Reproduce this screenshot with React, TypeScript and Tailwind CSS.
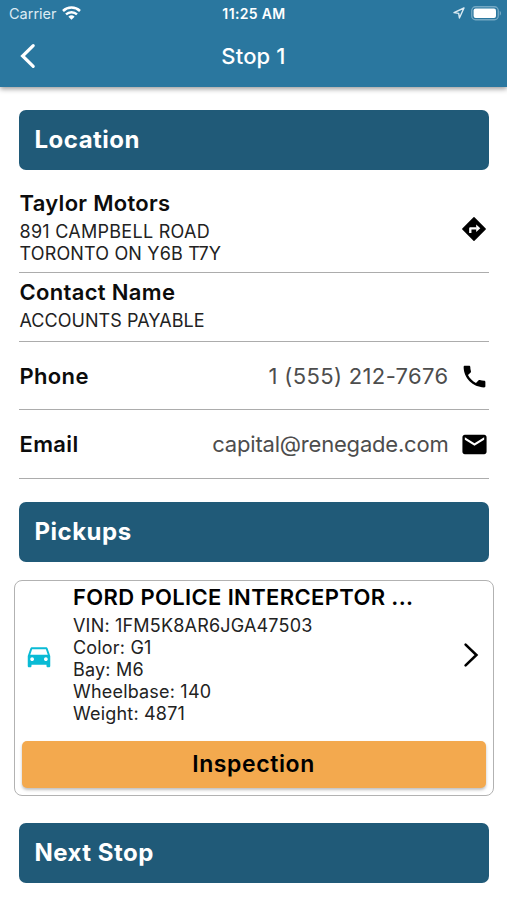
import { MdDirectionsCar, MdEmail, MdPhone } from 'react-icons/md';

interface SectionHeaderProps {
  title: string;
}

const SectionHeader = ({ title }: SectionHeaderProps) => (
  <h2 className="ml-[19px] mr-[18.5px] flex h-[60px] items-center rounded-[7px] bg-[#205a78] pl-[15.5px] text-[24px] font-bold leading-none tracking-[0.5px] text-white">
    {title}
  </h2>
);

interface ContactRowProps {
  label: string;
  value: string;
  icon: React.ElementType;
  valueClassName: string;
}

const ContactRow = ({ label, value, icon: Icon, valueClassName }: ContactRowProps) => (
  <div className="flex items-center border-b-[1.5px] border-[#acacac] pl-[0.5px] pt-[2px] text-[22px]">
    <span className="font-semibold tracking-[0.35px] text-[#0c0c0c]">{label}</span>
    <span className={`ml-auto mr-[11px] text-[#4d4d4d] ${valueClassName}`}>{value}</span>
    <Icon size={29} className="text-black" />
  </div>
);

const vehicleDetails = [
  'VIN: 1FM5K8AR6JGA47503',
  'Color: G1',
  'Bay: M6',
  'Wheelbase: 140',
  'Weight: 4871',
];

const DirectionsIcon = () => (
  <svg className="mr-[2px] mt-[27px]" width="26" height="26" viewBox="0 0 26 26">
    <path d="M13 1.8 24.2 13 13 24.2 1.8 13Z" stroke="black" strokeWidth="1.4" strokeLinejoin="round" />
    <path d="M9.3 17v-4.6h6.2" fill="none" stroke="white" strokeWidth="2.3" strokeLinejoin="round" />
    <path d="M15.2 8.6v7.4l4.1-3.7Z" fill="white" />
  </svg>
);

const StatusBar = () => (
  <div className="grid h-7 grid-cols-3 items-center pl-[9px] pr-[8px] text-[14px] leading-none">
    <div className="flex items-center gap-1.5">
      <span className="text-[14.5px] text-[#dcebf3]">Carrier</span>
      <svg className="-ml-px -mt-[3px]" width="19" height="14" viewBox="0 0 19 14" fill="none" stroke="currentColor">
        <path d="M1 5a12.3 12.3 0 0 1 17 0" strokeWidth="2.5" />
        <path d="M4 8.4a8 8 0 0 1 11 0" strokeWidth="2.4" />
        <path d="M9.5 13.8 6.4 10.8a4.5 4.5 0 0 1 6.2 0Z" fill="currentColor" stroke="none" />
      </svg>
    </div>
    <span className="text-center font-semibold tracking-[0.35px]">11:25 AM</span>
    <div className="-mr-[3px] -mt-[2px] flex items-center justify-end gap-[6px]">
      <svg className="-ml-px" width="12" height="12" viewBox="0 0 12 12" fill="none" stroke="#dcebf3" strokeWidth="1.4" strokeLinejoin="round">
        <path d="M11 1 1 5.6 5.7 6.4 6.4 11Z" />
      </svg>
      <svg width="31" height="15" viewBox="0 0 31 15">
        <rect x="0.75" y="0.75" width="26.5" height="13" rx="3.8" fill="none" stroke="#75a9c4" strokeWidth="1.3" />
        <rect x="2.6" y="2.6" width="22.4" height="9.3" rx="2" fill="white" />
        <path d="M28.7 5v4.6c1.8-.6 1.8-4 0-4.6Z" fill="#75a9c4" />
      </svg>
    </div>
  </div>
);

export default function App() {
  return (
    <main className="flex h-[900px] w-[507px] flex-col overflow-hidden bg-white font-['Inter',sans-serif]">
      <header className="h-[86.5px] shrink-0 bg-[#2a779f] text-white shadow-[0_2px_5px_rgba(0,0,0,0.4)]">
        <StatusBar />
        <div className="grid h-[57px] grid-cols-3 items-center">
          <button className="pl-[20px]" aria-label="Back">
            <svg className="-mt-[2px]" width="16" height="26" viewBox="0 0 16 26" fill="none" stroke="currentColor" strokeWidth="3.2" strokeLinecap="round">
              <path d="M13.2 2.6 2.6 13l10.6 10.4" />
            </svg>
          </button>
          <h1 className="text-center text-[22px] font-medium tracking-[0.15px]">Stop 1</h1>
        </div>
      </header>

      <div className="mt-[23px]">
        <SectionHeader title="Location" />
      </div>

      <section className="ml-[19px] mr-[18.5px] mt-[19px] grid grid-rows-[84px_69px_68px_69px]">
        <div className="flex items-start justify-between border-b-[1.5px] border-[#acacac] pl-[0.5px]">
          <div>
            <h3 className="-mt-px text-[22px] font-semibold leading-[30px] tracking-[0.3px] text-[#0c0c0c]">Taylor Motors</h3>
            <p className="mt-[3px] text-[18px] leading-[22px] tracking-[0.27px] text-[#222]">891 CAMPBELL ROAD</p>
            <p className="text-[18px] leading-[22px] tracking-[0.16px] text-[#222]">TORONTO ON Y6B T7Y</p>
          </div>
          <DirectionsIcon />
        </div>
        <div className="border-b-[1.5px] border-[#acacac] pl-[0.5px] pt-[4px]">
          <h3 className="text-[22px] font-semibold leading-[30px] tracking-[0.33px] text-[#0c0c0c]">Contact Name</h3>
          <p className="mt-px text-[18px] leading-[26px] tracking-[0.05px] text-[#222]">ACCOUNTS PAYABLE</p>
        </div>
        <ContactRow label="Phone" value="1 (555) 212-7676" icon={MdPhone} valueClassName="tracking-[0.35px]" />
        <ContactRow label="Email" value="capital@renegade.com" icon={MdEmail} valueClassName="tracking-[-0.2px]" />
      </section>

      <div className="mt-[23px]">
        <SectionHeader title="Pickups" />
      </div>

      <section className="mx-[13.5px] mt-[18px] flex h-[216px] flex-col rounded-[8px] border-[1.5px] border-[#b2b2b2] px-[7px] pb-[7px]">
        <div className="flex flex-1 items-start">
          <MdDirectionsCar size={30} className="ml-[2px] mt-[60px] shrink-0 text-[#0abbd5]" />
          <div className="ml-[19.5px]">
            <h3 className="text-[22px] font-semibold leading-[32px] tracking-[0.36px] text-black">FORD POLICE INTERCEPTOR ...</h3>
            <div className="mt-[2px]">
              {vehicleDetails.map((line) => (
                <p key={line} className="text-[18px] leading-[22px] tracking-[0.19px] text-[#222]">{line}</p>
              ))}
            </div>
          </div>
          <svg className="ml-auto mr-[6.5px] mt-[61px]" width="16" height="26" viewBox="0 0 16 26" fill="none" stroke="black" strokeWidth="2.6" strokeLinecap="round">
            <path d="M2.6 2.6 13.4 13 2.6 23.4" />
          </svg>
        </div>
        <button className="h-[47px] shrink-0 rounded-[5px] bg-[#f3a94e] text-[23px] font-semibold tracking-[0.6px] text-black shadow-[0_2px_3px_rgba(0,0,0,0.25)]">
          Inspection
        </button>
      </section>

      <div className="mt-[27px]">
        <SectionHeader title="Next Stop" />
      </div>
    </main>
  );
}
